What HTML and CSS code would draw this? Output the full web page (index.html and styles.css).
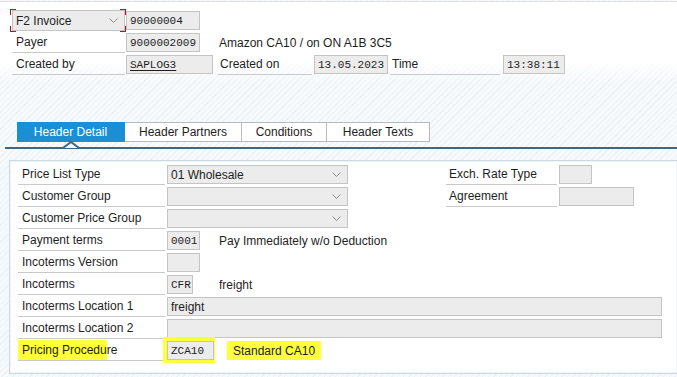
FILE: index.html
```html
<!DOCTYPE html>
<html lang="en">
<head>
  <meta charset="UTF-8" />
  <meta name="viewport" content="width=device-width, initial-scale=1" />
  <title>F2 Invoice 90000004 — Header</title>
  <link rel="stylesheet" href="styles.css">
</head>
<body>

  <div class="rule"></div>

  <div class="header">
    <div class="hrow">
      <div class="focus">
        <div class="combo head-combo">
          <span>F2 Invoice</span>
          <svg class="chev" width="9" height="5" viewBox="0 0 9 5"><polyline points="0.5,0.5 4.5,4.5 8.5,0.5" fill="none" stroke="#8a8a8a" stroke-width="1"/></svg>
        </div>
        <span class="corner tl"></span><span class="corner tr"></span>
        <span class="corner bl"></span><span class="corner br"></span>
      </div>
      <div class="inp mono w74">90000004</div>
    </div>
    <div class="hrow">
      <div class="lbl">Payer</div>
      <div class="inp mono w74">9000002009</div>
      <span class="desc">Amazon CA10 / on ON A1B 3C5</span>
    </div>
    <div class="hrow">
      <div class="lbl">Created by</div>
      <div class="inp mono w87"><u>SAPLOG3</u></div>
      <div class="lbl lbl-on">Created on</div>
      <div class="inp mono w74 ml2">13.05.2023</div>
      <div class="lbl lbl-time">Time</div>
      <div class="inp mono w62 ml3">13:38:11</div>
    </div>
  </div>

  <div class="tabbar">
    <div class="tab active">Header Detail</div>
    <div class="tab t-partners">Header Partners</div>
    <div class="tab t-cond">Conditions</div>
    <div class="tab t-texts">Header Texts</div>
  </div>
  <div class="tabline">
    <svg class="caret" width="16" height="8" viewBox="0 0 16 8"><polygon points="0,7 8,1 16,7" fill="#f4f7fa"/><polyline points="0,7 8,1 16,7" fill="none" stroke="#3f6784" stroke-width="2"/></svg>
  </div>

  <div class="panel">
    <div class="prow">
      <div class="plbl">Price List Type</div>
      <div class="combo pcombo">
        <span>01 Wholesale</span>
        <svg class="chev" width="9" height="5" viewBox="0 0 9 5"><polyline points="0.5,0.5 4.5,4.5 8.5,0.5" fill="none" stroke="#8a8a8a" stroke-width="1"/></svg>
      </div>
      <div class="plbl rlbl">Exch. Rate Type</div>
      <div class="inp w33 ml2"></div>
    </div>
    <div class="prow">
      <div class="plbl">Customer Group</div>
      <div class="combo pcombo">
        <span></span>
        <svg class="chev" width="9" height="5" viewBox="0 0 9 5"><polyline points="0.5,0.5 4.5,4.5 8.5,0.5" fill="none" stroke="#8a8a8a" stroke-width="1"/></svg>
      </div>
      <div class="plbl rlbl">Agreement</div>
      <div class="inp w75 ml2"></div>
    </div>
    <div class="prow">
      <div class="plbl">Customer Price Group</div>
      <div class="combo pcombo">
        <span></span>
        <svg class="chev" width="9" height="5" viewBox="0 0 9 5"><polyline points="0.5,0.5 4.5,4.5 8.5,0.5" fill="none" stroke="#8a8a8a" stroke-width="1"/></svg>
      </div>
    </div>
    <div class="prow">
      <div class="plbl">Payment terms</div>
      <div class="inp mono w33 ml2">0001</div>
      <span class="desc">Pay Immediately w/o Deduction</span>
    </div>
    <div class="prow">
      <div class="plbl">Incoterms Version</div>
      <div class="inp w33 ml2"></div>
    </div>
    <div class="prow">
      <div class="plbl">Incoterms</div>
      <div class="inp mono w26 ml2">CFR</div>
      <span class="desc d26">freight</span>
    </div>
    <div class="prow">
      <div class="plbl">Incoterms Location 1</div>
      <div class="inp wide ml2">freight</div>
    </div>
    <div class="prow">
      <div class="plbl">Incoterms Location 2</div>
      <div class="inp wide ml2"></div>
    </div>
    <div class="prow">
      <div class="plbl plbl-hl"><mark class="hl-text">Pricing Procedu</mark>re</div>
      <span class="hl-box"><span class="inp mono w47">ZCA10</span></span>
      <mark class="hl-desc">Standard CA10</mark>
    </div>
  </div>

</body>
</html>
```

FILE: styles.css
```css
body {
  margin: 0;
  width: 677px;
  height: 377px;
  overflow: hidden;
  font-family: "Liberation Sans", Arial, sans-serif;
  font-size: 12px;
  color: #1e1e1e;
  background: repeating-linear-gradient(135deg, #f7fafc 0 3px, #edf2f6 3px 4px);
}
.rule {
  margin-top: 1px;
  height: 1px;
  background: #e0e0e0;
}
.header {
  height: 80px;
  box-sizing: border-box;
  padding: 7px 0 0 12px;
  background: linear-gradient(#fff 75%, rgba(255, 255, 255, 0));
}
.hrow {
  display: flex;
  align-items: center;
  height: 22px;
}
.lbl {
  align-self: stretch;
  width: 113px;
  box-sizing: border-box;
  padding: 1px 0 0 4px;
  line-height: 21px;
  border-bottom: 1px solid #c9c9c9;
  margin-right: 1px;
}
.lbl-on {
  width: 94px;
  margin-left: 5px;
  padding-left: 2px;
  margin-right: 0;
}
.lbl-time {
  width: 110px;
  margin-left: 2px;
  padding-left: 2px;
  margin-right: 0;
}
.inp {
  height: 19px;
  box-sizing: border-box;
  border: 1px solid #c4c4c4;
  background: #ececec;
  padding: 1px 3px 0;
  line-height: 17px;
  white-space: nowrap;
  overflow: hidden;
}
.mono {
  font-family: "Liberation Mono", "Courier New", monospace;
  font-size: 11px;
}
.mono u {
  text-underline-offset: 2px;
}
.w26 { width: 26px; }
.w33 { width: 33px; }
.w47 { width: 47px; display: block; }
.w62 { width: 62px; }
.w74 { width: 74px; }
.w75 { width: 75px; }
.w87 { width: 87px; }
.wide { width: 495px; }
.ml2 { margin-left: 2px; }
.ml3 { margin-left: 3px; }
.desc {
  margin-left: 19px;
  padding-top: 2px;
  white-space: nowrap;
}
.d26 { margin-left: 26px; }

.combo {
  display: flex;
  align-items: center;
  box-sizing: border-box;
  border: 1px solid #c4c4c4;
  background: #ececec;
  padding: 1px 6px 0 3px;
}
.combo .chev { margin-left: auto; }
.head-combo {
  width: 113px;
  height: 21px;
}
.pcombo {
  width: 181px;
  height: 19px;
  margin-left: 2px;
}

.focus {
  position: relative;
  margin-right: 1px;
}
.corner {
  position: absolute;
  width: 5px;
  height: 5px;
  border-color: #9c1f2e;
  border-style: solid;
  border-width: 0;
}
.tl { left: -2px; top: -1px; border-top-width: 1px; border-left-width: 1px; }
.tr { right: -1px; top: -1px; border-top-width: 1px; border-right-width: 1px; }
.bl { left: -2px; bottom: -1px; border-bottom-width: 1px; border-left-width: 1px; }
.br { right: -1px; bottom: -1px; border-bottom-width: 1px; border-right-width: 1px; }

.tabbar {
  display: flex;
  padding: 40px 0 0 17px;
}
.tab {
  height: 20px;
  box-sizing: border-box;
  border: 1px solid #b9b9b9;
  border-left: 0;
  background: #fff;
  text-align: center;
  line-height: 19px;
}
.tab.active {
  width: 108px;
  background: #1a8fd3;
  border-color: #1a8fd3;
  color: #fff;
}
.t-partners { width: 117px; }
.t-cond { width: 85px; }
.t-texts { width: 103px; }

.tabline {
  position: relative;
  margin: 5px 0 0 5px;
  height: 2px;
  background: #3f6784;
}
.caret {
  position: absolute;
  left: 58px;
  top: -6px;
}

.panel {
  margin: 11px 0 0 9px;
  height: 214px;
  box-sizing: border-box;
  padding: 2px 0 0 8px;
  background: #fff;
  border: 1px solid #cbd9e4;
  border-right: 0;
  box-shadow: inset 0 0 0 1px #f1f5f8;
}
.prow {
  display: flex;
  align-items: center;
  height: 22px;
}
.plbl {
  align-self: stretch;
  width: 147px;
  box-sizing: border-box;
  padding: 1px 0 0 4px;
  line-height: 21px;
  border-bottom: 1px solid #c9c9c9;
  white-space: nowrap;
}
.rlbl {
  width: 111px;
  margin-left: 98px;
  padding-left: 3px;
}
.plbl-hl { padding-left: 0; }

mark {
  background: #ffff3a;
  color: inherit;
}
.hl-text {
  padding: 3px 0 3px 4px;
}
.hl-box {
  display: block;
  background: #ffff3a;
  margin-left: -2px;
  padding: 4px 1px 3px 4px;
}
.hl-desc {
  margin-left: 12px;
  padding: 3px 6px 2px;
  white-space: nowrap;
}
```
